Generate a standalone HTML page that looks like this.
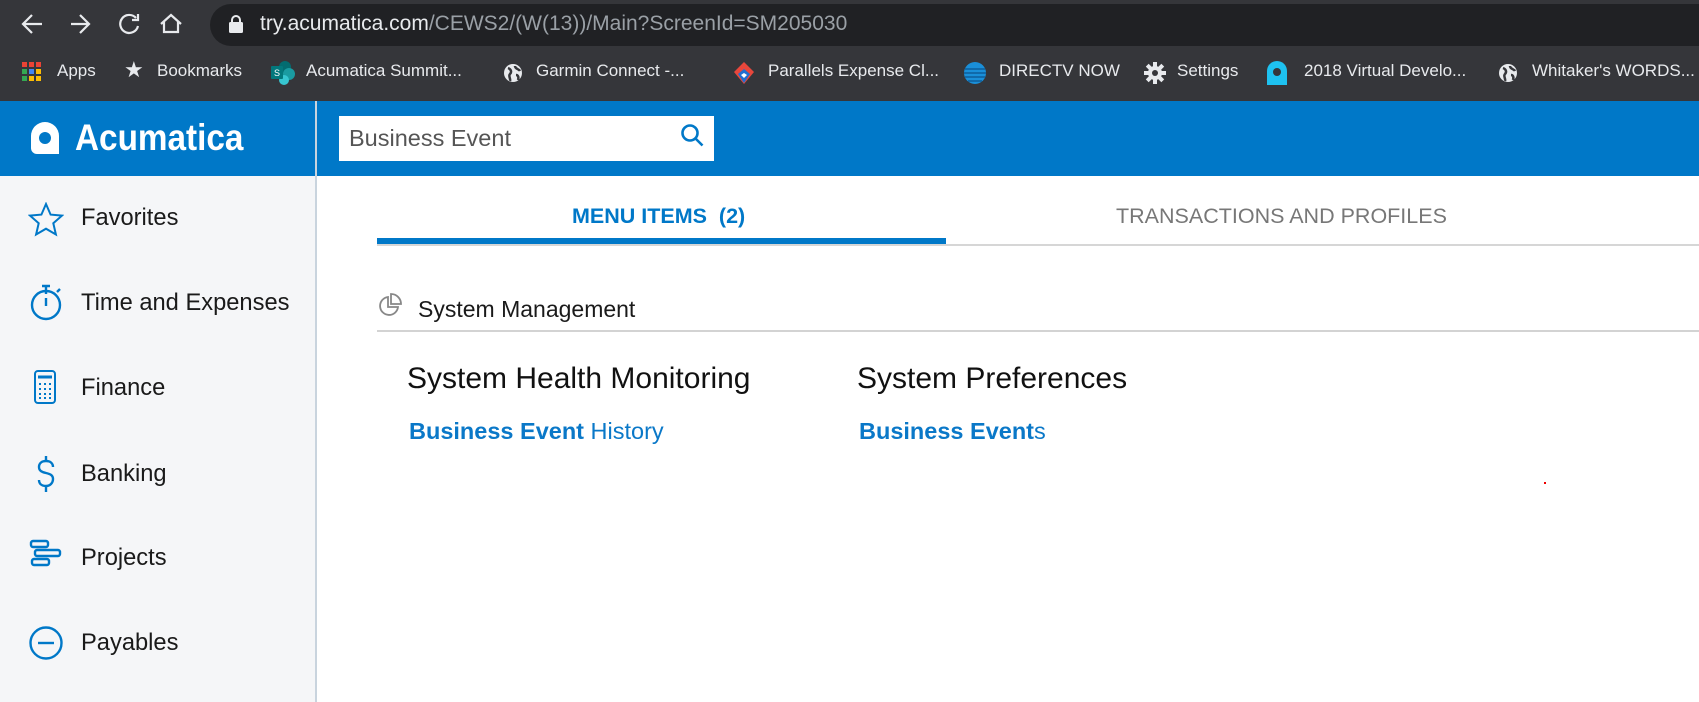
<!DOCTYPE html>
<html><head><meta charset="utf-8"><style>
*{margin:0;padding:0;box-sizing:border-box}
body{width:1699px;height:702px;overflow:hidden;background:#fff;font-family:"Liberation Sans",Arial,sans-serif;position:relative}
.a{position:absolute;white-space:nowrap}
#top{left:0;top:0;width:1699px;height:101px;background:#35363a}
#pill{left:210px;top:4px;width:1520px;height:42px;background:#202124;border-radius:21px}
.url{left:260px;top:12px;font-size:21px;color:#9aa0a6}
.url b{font-weight:normal;color:#e8eaed}
.bm{top:61px;font-size:17px;color:#e8eaed}
#hdr{left:0;top:101px;width:1699px;height:75px;background:#0078c8}
#side{left:0;top:176px;width:315px;height:526px;background:#f5f6f8}
#div{left:315px;top:101px;width:2px;height:601px;background:#c9d4de}
.si{left:81px;font-size:23.7px;color:#1a1a1a}
.ic{position:absolute;left:28px}
</style></head><body>
<div id="top" class="a"></div>
<div id="pill" class="a"></div>
<svg class="a" style="left:0;top:0" width="210" height="46" fill="none" stroke="#e8eaed" stroke-width="2.2">
<path d="M42 24H24M32 15l-9 9 9 9"/>
<path d="M71 24h18M80 15l9 9-9 9"/>
<path d="M136 18a9 9 0 1 0 2 8"/><path d="M138 14v6h-6" />
<path d="M161 24l10-9 10 9M164 22v10h14V22"/>
</svg>
<svg class="a" style="left:228px;top:14px" width="16" height="20"><rect x="1" y="8" width="14" height="11" rx="1.5" fill="#e8eaed"/><path d="M4 9V6a4 4 0 0 1 8 0v3" stroke="#e8eaed" stroke-width="2" fill="none"/></svg>
<div class="a url"><b>try.acumatica.com</b>/CEWS2/(W(13))/Main?ScreenId=SM205030</div>
<svg class="a" style="left:22px;top:62px" width="20" height="20"><g>
<rect x="0" y="0" width="5" height="5" fill="#ea4335"/><rect x="7" y="0" width="5" height="5" fill="#ea4335"/><rect x="14" y="0" width="5" height="5" fill="#ea4335"/>
<rect x="0" y="7" width="5" height="5" fill="#34a853"/><rect x="7" y="7" width="5" height="5" fill="#4285f4"/><rect x="14" y="7" width="5" height="5" fill="#fbbc05"/>
<rect x="0" y="14" width="5" height="5" fill="#34a853"/><rect x="7" y="14" width="5" height="5" fill="#fbbc05"/><rect x="14" y="14" width="5" height="5" fill="#fbbc05"/></g></svg>
<div class="a bm" style="left:57px">Apps</div>
<div class="a bm" style="left:124px;top:57px;font-size:22px">★</div>
<div class="a bm" style="left:157px">Bookmarks</div>
<svg class="a" style="left:270px;top:61px" width="26" height="24"><circle cx="15" cy="6" r="6" fill="#036c70"/><circle cx="19" cy="13" r="6" fill="#1a9ba1"/><circle cx="14" cy="19" r="5" fill="#37c6d0"/><rect x="1" y="5" width="12" height="13" rx="1" fill="#03787c"/><text x="4" y="15" font-size="9" fill="#fff" font-family="Liberation Sans">S</text></svg>
<div class="a bm" style="left:306px">Acumatica Summit...</div>
<svg class="a" style="left:503px;top:63px" width="20" height="20"><circle cx="10" cy="10" r="9" fill="#e8eaed"/><path d="M5 5c3 1 4 4 2 6s1 5 0 7M12 3c0 3 4 3 5 5M13 12c2 0 3 2 2 5" stroke="#35363a" stroke-width="2.5" fill="none"/></svg>
<div class="a bm" style="left:536px">Garmin Connect -...</div>
<svg class="a" style="left:732px;top:61px" width="24" height="24"><path d="M12 1l10 10-10 12L2 11z" fill="#e8473c"/><path d="M12 8l6 5-6 9-6-9z" fill="#1f6fd1"/><path d="M12 12l3 2-3 3-3-3z" fill="#fff"/></svg>
<div class="a bm" style="left:768px">Parallels Expense Cl...</div>
<svg class="a" style="left:963px;top:61px" width="24" height="24"><circle cx="12" cy="12" r="11" fill="#1a8fd8"/><path d="M2 8h20M1 12h22M2 16h20M5 20h14" stroke="#0d5f9a" stroke-width="1.6"/></svg>
<div class="a bm" style="left:999px">DIRECTV NOW</div>
<svg class="a" style="left:1144px;top:62px" width="22" height="22"><g fill="#e8eaed"><circle cx="11" cy="11" r="7"/><rect x="9" y="0" width="4" height="22"/><rect x="0" y="9" width="22" height="4"/><rect x="9" y="0" width="4" height="22" transform="rotate(45 11 11)"/><rect x="9" y="0" width="4" height="22" transform="rotate(-45 11 11)"/></g><circle cx="11" cy="11" r="3" fill="#35363a"/></svg>
<div class="a bm" style="left:1177px">Settings</div>
<svg class="a" style="left:1266px;top:60px" width="22" height="26"><path d="M11 1a10 10 0 0 0-10 10v14h20V11A10 10 0 0 0 11 1z" fill="#1ec2f0"/><circle cx="11" cy="12" r="4" fill="#35363a"/></svg>
<div class="a bm" style="left:1304px">2018 Virtual Develo...</div>
<svg class="a" style="left:1498px;top:63px" width="20" height="20"><circle cx="10" cy="10" r="9" fill="#e8eaed"/><path d="M5 5c3 1 4 4 2 6s1 5 0 7M12 3c0 3 4 3 5 5M13 12c2 0 3 2 2 5" stroke="#35363a" stroke-width="2.5" fill="none"/></svg>
<div class="a bm" style="left:1532px">Whitaker's WORDS...</div>

<div id="hdr" class="a"></div>
<svg class="a" style="left:30px;top:121px" width="30" height="34"><path d="M15 1A14 14 0 0 0 1 15v12a6 6 0 0 0 6 6h22V15A14 14 0 0 0 15 1z" fill="#fff"/><circle cx="15" cy="17" r="6" fill="#0078c8"/></svg>
<div class="a" style="left:75px;top:117px;font-size:37px;font-weight:bold;color:#fff;transform:scaleX(0.9);transform-origin:left">Acumatica</div>
<div class="a" style="left:339px;top:116px;width:375px;height:45px;background:#fff"></div>
<div class="a" style="left:349px;top:125px;font-size:23.5px;color:#555">Business Event</div>
<svg class="a" style="left:680px;top:123px" width="26" height="26" fill="none" stroke="#0078c8" stroke-width="2.6"><circle cx="10" cy="10" r="7.5"/><path d="M15.5 15.5l7 7"/></svg>

<div id="side" class="a"></div>
<div id="div" class="a"></div>
<svg class="ic" style="top:202px" width="36" height="36" fill="none" stroke="#0078c8" stroke-width="2"><path d="M18 2l4.6 10.6 11.4 1-8.7 7.6 2.6 11.3L18 26.7 8.1 32.5l2.6-11.3L2 13.6l11.4-1z"/></svg>
<div class="a si" style="top:205px">Favorites</div>
<svg class="ic" style="top:282px" width="36" height="40" fill="none" stroke="#0078c8" stroke-width="2.4"><circle cx="18" cy="23" r="14"/><path d="M18 4v8M14 4h8M18 16v8M29 10l3-3"/></svg>
<div class="a si" style="top:290px">Time and Expenses</div>
<svg class="ic" style="top:368px" width="36" height="40" fill="none" stroke="#0078c8" stroke-width="2"><rect x="7" y="3" width="20" height="32" rx="3"/><path d="M10 9h14" stroke-width="3"/><g fill="#0078c8" stroke="none"><rect x="11" y="15" width="2" height="2"/><rect x="16" y="15" width="2" height="2"/><rect x="21" y="15" width="2" height="2"/><rect x="11" y="20" width="2" height="2"/><rect x="16" y="20" width="2" height="2"/><rect x="21" y="20" width="2" height="2"/><rect x="11" y="25" width="2" height="2"/><rect x="16" y="25" width="2" height="2"/><rect x="21" y="25" width="2" height="2"/><rect x="11" y="29" width="2" height="2"/><rect x="16" y="29" width="2" height="2"/><rect x="21" y="29" width="2" height="2"/></g></svg>
<div class="a si" style="top:375px">Finance</div>
<svg class="ic" style="top:453px" width="36" height="44" fill="none" stroke="#0078c8" stroke-width="2.4"><path d="M25 14c0-4-3-6-7-6s-7 2-7 6 3 5 7 6 7 2 7 6-3 7-7 7-7-2-7-6M18 3v6M18 33v6"/></svg>
<div class="a si" style="top:461px">Banking</div>
<svg class="ic" style="top:538px" width="36" height="36" fill="none" stroke="#0078c8" stroke-width="2.4"><rect x="3" y="3" width="17" height="6" rx="2"/><rect x="7" y="12" width="25" height="6" rx="2"/><rect x="4" y="21" width="17" height="6" rx="2"/></svg>
<div class="a si" style="top:545px">Projects</div>
<svg class="ic" style="top:625px" width="36" height="36" fill="none" stroke="#0078c8" stroke-width="2.4"><circle cx="18" cy="18" r="15.5"/><path d="M10 18h16"/></svg>
<div class="a si" style="top:630px">Payables</div>

<div class="a" style="left:377px;top:244px;width:1322px;height:2px;background:#d6d6d6"></div>
<div class="a" style="left:377px;top:238px;width:569px;height:6px;background:#0078c8"></div>
<div class="a" style="left:572px;top:204px;font-size:21.5px;font-weight:bold;color:#0078c8">MENU ITEMS&nbsp; (2)</div>
<div class="a" style="left:1116px;top:204px;font-size:21.5px;color:#777">TRANSACTIONS AND PROFILES</div>

<svg class="a" style="left:378px;top:292px" width="26" height="26" fill="none" stroke="#888" stroke-width="1.8"><path d="M10 5a9 9 0 1 0 10 10H10z"/><path d="M13 2v10h10A10 10 0 0 0 13 2z"/></svg>
<div class="a" style="left:418px;top:296px;font-size:23px;color:#1a1a1a">System Management</div>
<div class="a" style="left:377px;top:330px;width:1322px;height:2px;background:#d3d3d3"></div>
<div class="a" style="left:407px;top:362px;font-size:30px;color:#111">System Health Monitoring</div>
<div class="a" style="left:857px;top:362px;font-size:30px;color:#111">System Preferences</div>
<div class="a" style="left:409px;top:418px;font-size:23.5px;color:#0a78c8"><b>Business Event</b> History</div>
<div class="a" style="left:859px;top:418px;font-size:23.5px;color:#0a78c8"><b>Business Event</b>s</div>
<div class="a" style="left:1544px;top:482px;width:2px;height:2px;background:#e00"></div>
</body></html>
